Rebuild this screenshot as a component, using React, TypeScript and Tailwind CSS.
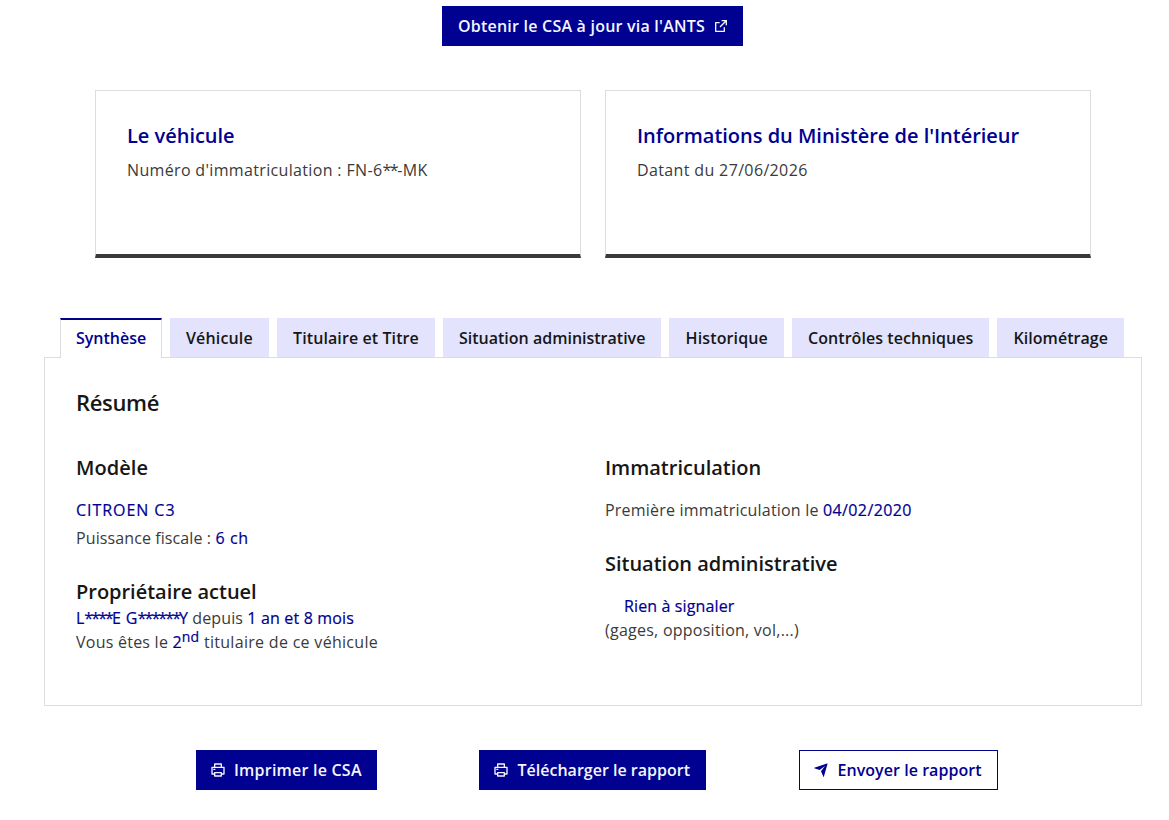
import React from "react";
import { RiExternalLinkLine, RiPrinterLine, RiSendPlaneFill } from "react-icons/ri";

const tabs = [
  { label: "Véhicule", width: "w-[99px]", spacing: "pl-[16px] tracking-[0.15px]" },
  { label: "Titulaire et Titre", width: "w-[158px]", spacing: "pl-[16px] tracking-[0.1px]" },
  { label: "Situation administrative", width: "w-[218px]", spacing: "pl-[16px] tracking-normal" },
  { label: "Historique", width: "w-[115px]", spacing: "pl-[16.5px] tracking-[0.14px]" },
  { label: "Contrôles techniques", width: "w-[197px]", spacing: "pl-[16px] tracking-[0.06px]" },
  { label: "Kilométrage", width: "w-[127px]", spacing: "pl-[16.5px] tracking-[0.05px]" },
];

function Card({ title, children }: { title: string; children: React.ReactNode }) {
  return (
    <div className="flex h-[168px] w-[486px] flex-col border border-b-4 border-[#ddd] border-b-[#3a3a3a] px-[31px] pt-[31px]">
      <h2 className="text-[20px] leading-[28px] font-semibold tracking-[-0.02px] text-[#000091]">{title}</h2>
      <p className="mt-[8px]">{children}</p>
    </div>
  );
}

function Blue({ children, className = "" }: { children: React.ReactNode; className?: string }) {
  return <span className={`text-[#000091] [-webkit-text-stroke:0.2px_#000091] ${className}`}>{children}</span>;
}

function Heading({ children, className = "" }: { children: React.ReactNode; className?: string }) {
  return <h3 className={`text-[20px] leading-[28px] font-semibold text-[#161616] ${className}`}>{children}</h3>;
}

export default function App() {
  return (
    <div className="h-[820px] w-[1169px] overflow-hidden bg-white pt-[6px] font-['Open_Sans',sans-serif] text-[16px] leading-[24px] whitespace-nowrap text-[#3a3a3a]">
      <div className="ml-[442px] flex">
        <button className="flex h-[40px] w-[301px] items-center gap-[8px] bg-[#000091] pl-[16px] font-semibold text-[#f5f5fe]">
          <span className="w-[247px] text-left tracking-[0.22px]">Obtenir le CSA à jour via l'ANTS</span>
          <RiExternalLinkLine className="size-[16px]" />
        </button>
      </div>

      <div className="mt-[44px] ml-[95px] flex gap-[24px]">
        <Card title="Le véhicule">
          <span className="tracking-[0.34px]">Numéro d'immatriculation : </span>
          <span className="tracking-[0.35px]">FN-6</span>
          <span className="tracking-[-1.4px]">**</span>
          <span className="tracking-[0.35px]">-MK</span>
        </Card>
        <Card title="Informations du Ministère de l'Intérieur">
          <span className="tracking-[0.36px]">Datant du 27/06/2026</span>
        </Card>
      </div>

      <div className="mt-[60px] ml-[60px] flex h-[39px] gap-[8px]">
        <button className="z-10 h-[40px] w-[102px] border-x border-t-2 border-x-[#ddd] border-t-[#000091] bg-white pt-[6px] pb-[10px] pl-[15px] text-left leading-[24px] font-semibold text-[#000091]">
          Synthèse
        </button>
        {tabs.map((t) => (
          <button
            key={t.label}
            className={`flex h-[39px] items-start bg-[#e3e3fd] pt-[8px] font-semibold text-[#161616] ${t.width} ${t.spacing}`}
          >
            {t.label}
          </button>
        ))}
      </div>

      <section className="ml-[44px] h-[349px] w-[1098px] border border-[#ddd] pt-[30px] pl-[31px]">
        <h2 className="text-[22px] leading-[28px] font-semibold tracking-[-0.35px] text-[#161616]">Résumé</h2>
        <div className="mt-[38px] flex">
          <div className="w-[529px]">
            <Heading className="tracking-[0.05px]">Modèle</Heading>
            <p className="mt-[16px]">
              <Blue className="tracking-[0.95px]">CITROEN C3</Blue>
            </p>
            <p className="mt-[4px]">
              <span className="tracking-[0.1px]">Puissance fiscale : </span>
              <Blue className="tracking-[0.65px]">6 ch</Blue>
            </p>
            <Heading className="mt-[28px] tracking-[-0.02px]">Propriétaire actuel</Heading>
            <p className="h-[24px]">
              <Blue>
                L<span className="tracking-[-1.9px]">****</span>
                <span className="tracking-[0.3px]">E G</span>
                <span className="tracking-[-1.9px]">******</span>Y
              </Blue>
              <span className="tracking-[0.12px]"> depuis </span>
              <Blue className="tracking-[0.16px]">1 an et 8 mois</Blue>
            </p>
            <p className="h-[24px]">
              <span className="tracking-[0.24px]">Vous êtes le </span>
              <Blue>
                2<sup className="top-[-0.42em] text-[14px] tracking-[0.3px]">nd</sup>
              </Blue>
              <span className="tracking-[0.3px]"> titulaire de ce véhicule</span>
            </p>
          </div>
          <div>
            <Heading>Immatriculation</Heading>
            <p className="mt-[16px]">
              <span className="tracking-[0.2px]">Première immatriculation le </span>
              <Blue className="tracking-[0.38px]">04/02/2020</Blue>
            </p>
            <Heading className="mt-[28px] tracking-[-0.02px]">Situation administrative</Heading>
            <p className="mt-[16px] pl-[19px]">
              <Blue className="tracking-[0.13px]">Rien à signaler</Blue>
            </p>
            <p className="tracking-[0.25px]">(gages, opposition, vol,...)</p>
          </div>
        </div>
      </section>

      <div className="mt-[44px] ml-[196px] flex font-semibold">
        <button className="flex h-[40px] w-[181px] items-center gap-[8px] bg-[#000091] pl-[14px] text-[#f5f5fe]">
          <RiPrinterLine className="size-[16px]" />
          <span className="tracking-[0.22px]">Imprimer le CSA</span>
        </button>
        <button className="ml-[102px] flex h-[40px] w-[227px] items-center gap-[8px] bg-[#000091] pl-[14px] text-[#f5f5fe]">
          <RiPrinterLine className="size-[16px]" />
          <span className="pl-[0.5px] tracking-[0.01px]">Télécharger le rapport</span>
        </button>
        <button className="ml-[93px] flex h-[40px] w-[199px] items-center gap-[8px] border border-[#000091] pl-[13px] text-[#000091]">
          <RiSendPlaneFill className="size-[16px]" />
          <span className="pl-[0.5px] tracking-[0.05px]">Envoyer le rapport</span>
        </button>
      </div>
    </div>
  );
}
